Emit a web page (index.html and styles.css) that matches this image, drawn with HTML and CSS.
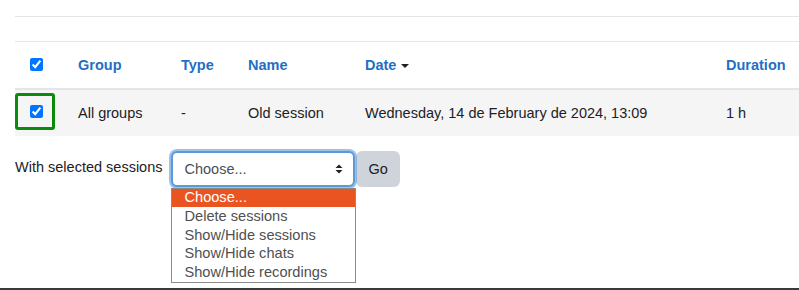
FILE: index.html
```html
<!DOCTYPE html>
<html lang="en">
<head>
    <meta charset="UTF-8">
    <meta name="viewport" content="width=device-width, initial-scale=1.0">
    <title>Sessions</title>
    <link rel="stylesheet" href="styles.css">
</head>
<body>
    <div class="page">
        <table class="sessions">
            <colgroup>
                <col class="col-check">
                <col class="col-group">
                <col class="col-type">
                <col class="col-name">
                <col class="col-date">
                <col>
            </colgroup>
            <thead>
                <tr class="spacer"><td colspan="6"></td></tr>
                <tr class="head">
                    <th class="cell-check"><input type="checkbox" checked></th>
                    <th><a href="#">Group</a></th>
                    <th><a href="#">Type</a></th>
                    <th><a href="#">Name</a></th>
                    <th><a href="#">Date</a><span class="caret"></span></th>
                    <th><a href="#">Duration</a></th>
                </tr>
            </thead>
            <tbody>
                <tr class="row">
                    <td class="cell-check">
                        <div class="highlight"><input type="checkbox" checked></div>
                    </td>
                    <td>All groups</td>
                    <td>-</td>
                    <td>Old session</td>
                    <td>Wednesday, 14 de February de 2024, 13:09</td>
                    <td>1 h</td>
                </tr>
            </tbody>
        </table>

        <form class="bulk" onsubmit="return false">
            <label class="bulk-label">With selected sessions</label>
            <div class="picker">
                <div class="select">
                    <span>Choose...</span>
                    <svg class="select-arrows" width="8" height="10" viewBox="0 0 8 10">
                        <path d="M0.5 4 L4 0.5 L7.5 4 Z" fill="#1d2125"/>
                        <path d="M0.5 6 L4 9.5 L7.5 6 Z" fill="#1d2125"/>
                    </svg>
                </div>
                <ul class="options">
                    <li class="active">Choose...</li>
                    <li>Delete sessions</li>
                    <li>Show/Hide sessions</li>
                    <li>Show/Hide chats</li>
                    <li>Show/Hide recordings</li>
                </ul>
            </div>
            <button class="go">Go</button>
        </form>
    </div>
</body>
</html>
```

FILE: styles.css
```css
body {
    margin: 0;
    font-family: "Liberation Sans", Arial, sans-serif;
    font-size: 14.5px;
    color: #1d2125;
    background-color: #ffffff;
}
.page {
    height: 290px;
    box-sizing: border-box;
    border-bottom: 2px solid #3a3a3a;
    padding-top: 16px;
}
.sessions {
    border-collapse: collapse;
    table-layout: fixed;
    width: calc(100% - 15px);
    margin-left: 15px;
}
.col-check { width: 48px; }
.col-group { width: 103px; }
.col-type { width: 67px; }
.col-name { width: 117px; }
.col-date { width: 361px; }

.sessions td, .sessions th {
    padding: 0 0 0 15px;
    text-align: left;
    white-space: nowrap;
}
.spacer td {
    height: 24px;
    border-top: 1px solid #e3e6e9;
    border-bottom: 1px solid #e3e6e9;
    padding: 0;
}
.head th {
    height: 42px;
    border-bottom: 2px solid #e3e6e9;
    font-weight: bold;
}
.head th.cell-check {
    vertical-align: middle;
    padding: 0 0 4px 0;
}
.head a {
    color: #1f6fc5;
    text-decoration: none;
}
.caret {
    display: inline-block;
    width: 0;
    height: 0;
    margin-left: 5px;
    vertical-align: middle;
    border-left: 4px solid transparent;
    border-right: 4px solid transparent;
    border-top: 4px solid #1d2125;
}
.row td {
    height: 46px;
    background-color: #f5f5f5;
}
.row td.cell-check {
    padding: 0;
    vertical-align: top;
}
.cell-check input {
    width: 13px;
    height: 13px;
    margin: 0 0 0 15px;
    vertical-align: middle;
}
.highlight {
    width: 40px;
    height: 37px;
    margin-top: 3px;
    box-sizing: border-box;
    border: 3px solid #0b8a0b;
    border-radius: 3px;
    display: flex;
    align-items: center;
}
.highlight input {
    margin-left: 12px;
}

.bulk {
    display: flex;
    align-items: flex-start;
    margin: 15px 0 0 15px;
}
.bulk-label {
    line-height: 33px;
    margin-right: 9px;
}
.picker {
    position: relative;
}
.select {
    width: 184px;
    height: 36px;
    box-sizing: border-box;
    border: 2px solid #5b9ad8;
    border-radius: 6px;
    box-shadow: 0 0 0 2px rgba(91, 154, 216, 0.6);
    background-color: #ffffff;
    display: flex;
    align-items: center;
    justify-content: space-between;
    padding: 0 10px 0 11px;
    color: #495057;
}
.select-arrows {
    display: block;
}
.options {
    position: absolute;
    top: 37px;
    left: 0;
    width: 185px;
    box-sizing: border-box;
    margin: 0;
    padding: 0 0 1px 0;
    list-style: none;
    background-color: #ffffff;
    border: 1px solid #8c8c8c;
    color: #505050;
    font-size: 14.6px;
    z-index: 2;
}
.options li {
    line-height: 18.6px;
    padding-left: 12px;
}
.options li.active {
    background-color: #e95420;
    color: #ffffff;
    line-height: 17px;
    padding-bottom: 1px;
}
.go {
    height: 36px;
    margin-left: 1px;
    padding: 0 12px;
    border: none;
    border-radius: 6px;
    background-color: #ced4da;
    color: #1d2125;
    font-family: inherit;
    font-size: 14.5px;
}
```
